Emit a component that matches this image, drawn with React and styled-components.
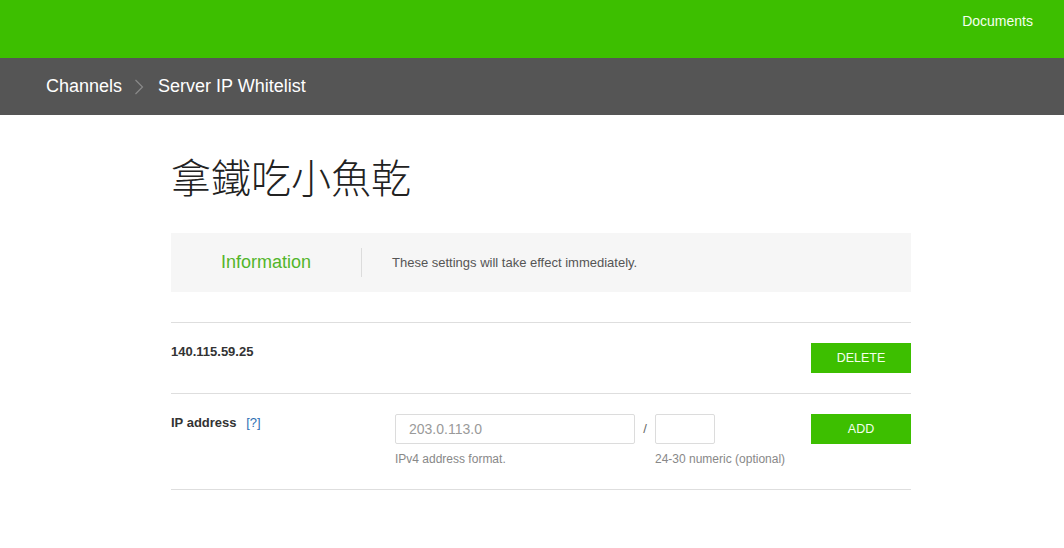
import React from 'react';
import styled, { createGlobalStyle } from 'styled-components';

const GlobalStyle = createGlobalStyle`
  body {
    margin: 0;
    background: #fff;
    font-family: "Liberation Sans", Arial, sans-serif;
    color: #333;
  }
`;

function App() {
  return (
    <>
      <GlobalStyle />
      <TopBar>
        <DocLink href='#'>Documents</DocLink>
      </TopBar>
      <Breadcrumb>
        <Crumb>Channels</Crumb>
        <Chevron width='10' height='16' viewBox='0 0 10 16'>
          <polyline points='1.5,1 8.5,8 1.5,15' fill='none' stroke='#8a8a8a' strokeWidth='1.2' />
        </Chevron>
        <Crumb>Server IP Whitelist</Crumb>
      </Breadcrumb>
      <Main>
        <Title>拿鐵吃小魚乾</Title>
        <InfoBox>
          <InfoLabel>Information</InfoLabel>
          <InfoText>These settings will take effect immediately.</InfoText>
        </InfoBox>
        <List>
          <Row>
            <RowLabel>140.115.59.25</RowLabel>
            <GreenButton>DELETE</GreenButton>
          </Row>
          <Row>
            <RowLabel>
              IP address <Help href='#'>[?]</Help>
            </RowLabel>
            <Field>
              <Input placeholder='203.0.113.0' $width={240} />
              <Hint>IPv4 address format.</Hint>
            </Field>
            <Slash>/</Slash>
            <Field>
              <Input $width={60} />
              <Hint>24-30 numeric (optional)</Hint>
            </Field>
            <GreenButton>ADD</GreenButton>
          </Row>
        </List>
      </Main>
    </>
  );
}

export default App;

const TopBar = styled.header`
  height: 58px;
  background: #3dbf00;
  display: flex;
  justify-content: flex-end;
  align-items: flex-start;
  padding: 13px 31px 0 0;
  box-sizing: border-box;
`;

const DocLink = styled.a`
  color: #f4ffee;
  font-size: 14px;
  line-height: 16px;
  text-decoration: none;
`;

const Breadcrumb = styled.nav`
  height: 57px;
  background: #555555;
  display: flex;
  align-items: center;
  padding-left: 46px;
`;

const Crumb = styled.span`
  color: #fff;
  font-size: 18px;
`;

const Chevron = styled.svg`
  margin: 0 14px 0 12px;
`;

const Main = styled.main`
  width: 740px;
  margin-left: 171px;
  padding-top: 37px;
`;

const Title = styled.h1`
  margin: 0 0 33px;
  font-family: "Noto Sans CJK TC", "Noto Sans CJK SC", sans-serif;
  font-weight: 300;
  font-size: 40px;
  line-height: 48px;
  color: #222;
`;

const InfoBox = styled.div`
  height: 59px;
  background: #f6f6f6;
  display: flex;
  align-items: center;
`;

const InfoLabel = styled.div`
  width: 190px;
  text-align: center;
  color: #52b52a;
  font-size: 18px;
  border-right: 1px solid #dcdcdc;
  line-height: 29px;
`;

const InfoText = styled.div`
  padding-left: 30px;
  font-size: 13px;
  color: #555;
`;

const List = styled.div`
  margin-top: 30px;
  border-bottom: 1px solid #dedede;
`;

const Row = styled.div`
  display: flex;
  align-items: flex-start;
  border-top: 1px solid #dedede;
  padding: 20px 0;
`;

const RowLabel = styled.div`
  width: 224px;
  font-size: 13px;
  font-weight: bold;
  line-height: 18px;
  color: #333;
`;

const Help = styled.a`
  margin-left: 6px;
  font-weight: normal;
  color: #2f6fb3;
  text-decoration: none;
`;

const Field = styled.div`
  display: flex;
  flex-direction: column;
`;

const Input = styled.input`
  width: ${(p) => p.$width}px;
  height: 30px;
  box-sizing: border-box;
  border: 1px solid #dcdcdc;
  border-radius: 2px;
  padding: 0 13px;
  font-family: "Liberation Sans", Arial, sans-serif;
  font-size: 14px;
  color: #333;
  outline: none;
  &::placeholder {
    color: #9a9a9a;
  }
`;

const Hint = styled.div`
  margin: 8px 0 2px;
  font-size: 12px;
  line-height: 15px;
  color: #888;
`;

const Slash = styled.span`
  width: 20px;
  text-align: center;
  line-height: 30px;
  font-size: 13px;
  color: #666;
`;

const GreenButton = styled.button`
  margin-left: auto;
  width: 100px;
  height: 30px;
  border: none;
  background: #3dbf00;
  color: #f4ffee;
  font-family: "Liberation Sans", Arial, sans-serif;
  font-size: 12.5px;
  cursor: pointer;
`;
